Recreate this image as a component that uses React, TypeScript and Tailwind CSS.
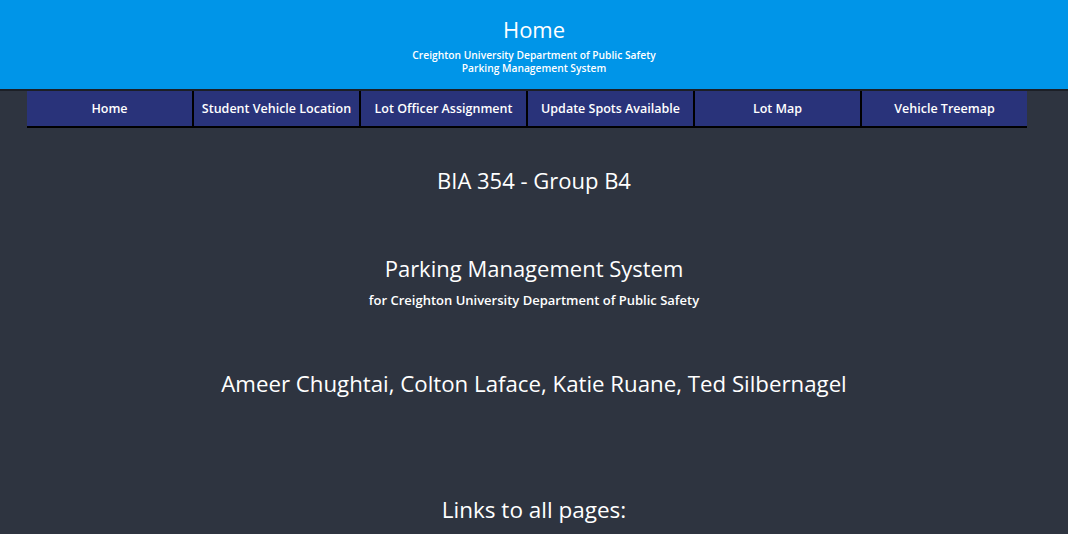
const links = [
  'Home',
  'Student Vehicle Location',
  'Lot Officer Assignment',
  'Update Spots Available',
  'Lot Map',
  'Vehicle Treemap',
];

export default function App() {
  return (
    <div className="min-h-[534px] bg-[#2e3440] text-white font-['Open_Sans',sans-serif]">
      {/* Header */}
      <header className="h-[91px] bg-[#0095e8] border-b-2 border-[#1c1f26] flex flex-col items-center pt-[15px]">
        <h1 className="text-[22px] leading-[28px] font-medium">Home</h1>
        <p className="mt-[6px] text-[10.25px] leading-[13px] font-semibold text-center">
          Creighton University Department of Public Safety
          <br />
          Parking Management System
        </p>
      </header>

      {/* Nav */}
      <nav className="ml-[27px] w-[1000px] flex border-b-2 border-black">
        {links.map((l, i) => (
          <a
            key={l}
            href="#"
            className={`flex-1 h-[35px] pt-[2px] flex items-center justify-center bg-[#29337a] text-[12.5px] font-semibold ${
              i < links.length - 1 ? 'border-r-2 border-black' : ''
            }`}
          >
            {l}
          </a>
        ))}
      </nav>

      {/* Content */}
      <main className="flex flex-col items-center text-center">
        <h2 className="mt-[37px] text-[22px] leading-[30px] font-medium">BIA 354 - Group B4</h2>
        <h2 className="mt-[58px] text-[22px] leading-[30px] font-medium">Parking Management System</h2>
        <p className="mt-[8px] text-[13px] leading-[18px] font-semibold">
          for Creighton University Department of Public Safety
        </p>
        <h2 className="mt-[59px] text-[22.25px] leading-[32px] font-medium">
          Ameer Chughtai, Colton Laface, Katie Ruane, Ted Silbernagel
        </h2>
        <h2 className="mt-[95px] text-[22.5px] leading-[30px] font-medium">Links to all pages:</h2>
      </main>
    </div>
  );
}
